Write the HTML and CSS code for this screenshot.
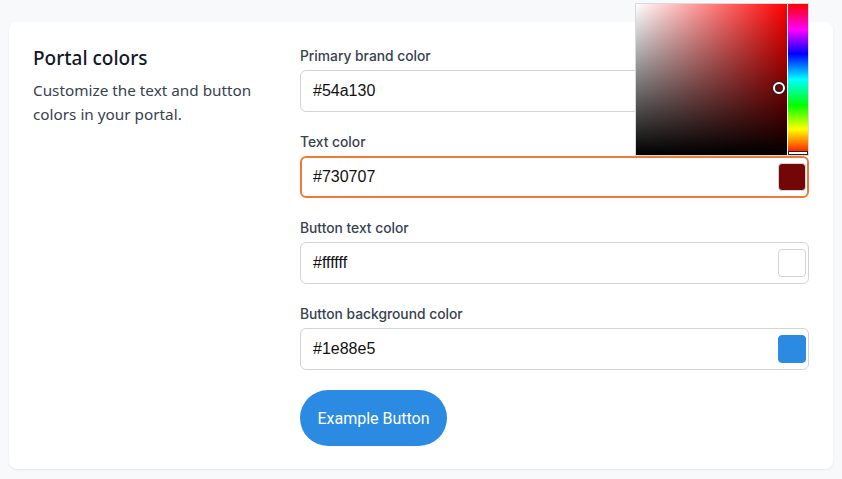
FILE: index.html
```html
<!DOCTYPE html>
<html>
<head>
<meta charset="utf-8">
<link rel="stylesheet" href="styles.css">
</head>
<body>
<div class="page">
  <section class="card">
    <div class="intro">
      <h2 class="title">Portal colors</h2>
      <p class="desc">Customize the text and button colors in your portal.</p>
    </div>
    <div class="fields">
      <div class="field">
        <label class="label">Primary brand color</label>
        <div class="input">
          <span class="value">#54a130</span>
          <span class="swatch green"></span>
          <div class="picker">
            <div class="sat">
              <span class="thumb"></span>
            </div>
            <div class="hue"><span class="hue-mark"></span></div>
          </div>
        </div>
      </div>
      <div class="field">
        <label class="label">Text color</label>
        <div class="input focused">
          <span class="value">#730707</span>
          <span class="swatch maroon"></span>
        </div>
      </div>
      <div class="field">
        <label class="label">Button text color</label>
        <div class="input">
          <span class="value">#ffffff</span>
          <span class="swatch white"></span>
        </div>
      </div>
      <div class="field">
        <label class="label">Button background color</label>
        <div class="input">
          <span class="value">#1e88e5</span>
          <span class="swatch blue"></span>
        </div>
      </div>
      <button class="example">Example Button</button>
    </div>
  </section>
</div>
</body>
</html>
```
FILE: styles.css
```css
* { box-sizing: border-box; }
html, body { margin: 0; padding: 0; }
body {
  background: #f8f9fb;
  font-family: "Liberation Sans", Arial, sans-serif;
  width: 842px;
  height: 479px;
  overflow: hidden;
}
.page {
  padding: 22px 9px 0 9px;
}
.card {
  background: #fff;
  border-radius: 8px;
  box-shadow: 0 1px 2px rgba(0,0,0,0.08);
  padding: 24px 24px 23px 24px;
  display: grid;
  grid-template-columns: 267px 1fr;
}
.title {
  margin: 0;
  font-family: "Noto Sans", sans-serif;
  font-size: 19px;
  font-weight: 500;
  color: #111827;
  line-height: 24px;
}
.desc {
  margin: 8px 0 0 0;
  font-family: "Noto Sans", sans-serif;
  font-size: 15.3px;
  line-height: 24px;
  color: #374151;
  width: 236px;
}
.fields {
  display: flex;
  flex-direction: column;
  align-items: flex-start;
}
.field {
  width: 100%;
  margin-bottom: 20px;
}
.label {
  display: block;
  font-size: 13.8px;
  font-weight: 500;
  line-height: 18px;
  color: #374151;
  margin-top: 1px;
  margin-bottom: 5px;
  font-family: "Inter", sans-serif;
}
.input {
  position: relative;
  height: 42px;
  border: 1px solid #d1d5db;
  border-radius: 6px;
  display: flex;
  align-items: center;
  justify-content: space-between;
  padding: 0 2px 0 12px;
}
.input.focused {
  border: 2px solid #f07a35;
  padding: 0 1px 0 11px;
}
.value {
  font-size: 16px;
  color: #111;
}
.swatch {
  width: 28px;
  height: 28px;
  border-radius: 4px;
  border: 1px solid #d1d5db;
}
.swatch.green { background: #54a130; }
.swatch.maroon { background: #730707; }
.swatch.white { background: #fff; }
.swatch.blue { background: #2b8ae2; border-color: #2b8ae2; }
.picker {
  position: absolute;
  left: 334px;
  top: -68px;
  width: 174px;
  height: 153px;
  background: #fff;
  border: 1px solid #d9d9d9;
  display: flex;
  z-index: 5;
}
.sat {
  position: relative;
  width: 152px;
  height: 151px;
  background: linear-gradient(to top, #000, rgba(0,0,0,0)), linear-gradient(to right, #fff, #f00);
}
.thumb {
  position: absolute;
  left: 137px;
  top: 78px;
  width: 12px;
  height: 12px;
  border-radius: 50%;
  border: 2px solid #fff;
  box-shadow: 0 0 0 1px #222, inset 0 0 0 1px #222;
}
.hue {
  position: relative;
  width: 20px;
  height: 151px;
  margin-left: 1px;
  background: linear-gradient(to bottom, #f00 0%, #f0f 17%, #00f 33%, #0ff 50%, #0f0 67%, #ff0 83%, #f00 100%);
}
.hue-mark {
  position: absolute;
  left: 0;
  right: 0;
  bottom: 0;
  height: 4px;
  background: #fff;
  border: 1px solid #222;
}
.example {
  margin-top: 0;
  height: 56px;
  width: 147px;
  border: none;
  border-radius: 28px;
  background: #2b8ae2;
  color: #fff;
  font-family: "Roboto", sans-serif;
  font-size: 16px;
  padding: 0;
}
```
